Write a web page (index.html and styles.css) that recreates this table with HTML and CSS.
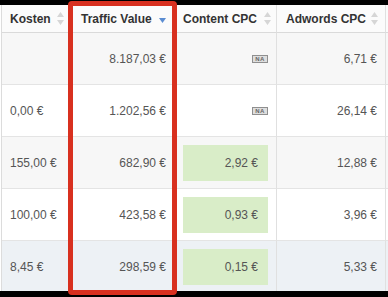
FILE: index.html
```html
<!DOCTYPE html>
<html>
<head>
<meta charset="utf-8">
<link rel="stylesheet" href="styles.css">
</head>
<body>
<div class="frame">
  <div class="grid">
    <div class="th"><span>Kosten</span><svg class="sort" width="7" height="13" viewBox="0 0 7 13"><path d="M3.5 0 L7 5 L0 5 Z M0 8 L7 8 L3.5 13 Z" fill="#d6d6d6"/></svg></div>
    <div class="th"><span>Traffic Value</span><svg class="desc" width="7" height="5" viewBox="0 0 7 5"><path d="M0 0 L7 0 L3.5 5 Z" fill="#5b8dd2"/></svg></div>
    <div class="th"><span>Content CPC</span><svg class="sort" width="7" height="13" viewBox="0 0 7 13"><path d="M3.5 0 L7 5 L0 5 Z M0 8 L7 8 L3.5 13 Z" fill="#d6d6d6"/></svg></div>
    <div class="th"><span>Adwords CPC</span><svg class="sort" width="7" height="13" viewBox="0 0 7 13"><path d="M3.5 0 L7 5 L0 5 Z M0 8 L7 8 L3.5 13 Z" fill="#d6d6d6"/></svg></div>
    <div class="th last"></div>

    <div class="td alt"></div>
    <div class="td alt num">8.187,03 €</div>
    <div class="td alt num"><span class="na">NA</span></div>
    <div class="td alt num">6,71 €</div>
    <div class="td alt last"></div>

    <div class="td">0,00 €</div>
    <div class="td num">1.202,56 €</div>
    <div class="td num"><span class="na">NA</span></div>
    <div class="td num">26,14 €</div>
    <div class="td last"></div>

    <div class="td alt">155,00 €</div>
    <div class="td alt num">682,90 €</div>
    <div class="td alt num"><div class="bar">2,92 €</div></div>
    <div class="td alt num">12,88 €</div>
    <div class="td alt last"></div>

    <div class="td">100,00 €</div>
    <div class="td num">423,58 €</div>
    <div class="td num"><div class="bar">0,93 €</div></div>
    <div class="td num">3,96 €</div>
    <div class="td last"></div>

    <div class="td hover">8,45 €</div>
    <div class="td hover num">298,59 €</div>
    <div class="td hover num"><div class="bar">0,15 €</div></div>
    <div class="td hover num">5,33 €</div>
    <div class="td hover last"></div>
  </div>
</div>
<div class="highlight"></div>
</body>
</html>
```
FILE: styles.css
```css
html, body {
  margin: 0;
  padding: 0;
  background: #000;
  height: 297px;
  overflow: hidden;
}
body {
  position: relative;
  font-family: "Liberation Sans", Arial, Helvetica, sans-serif;
  font-size: 12px;
}
.frame {
  margin-top: 5px;
  height: 286px;
  overflow: hidden;
  background: #fff;
  padding-left: 1px;
}
.grid {
  display: grid;
  grid-template-columns: 70px 103px 102px 109px 1fr;
  grid-template-rows: 28px repeat(5, 52px);
  border-left: 1px solid #dcdcdc;
}
.th, .td {
  box-sizing: border-box;
  border-right: 1px solid #e0e0e0;
  border-bottom: 1px solid #e4e4e4;
  display: flex;
  align-items: center;
  padding: 0 8px;
}
.th {
  background: #fbfbfb;
  color: #333;
  font-weight: bold;
  justify-content: space-between;
  padding-right: 7px;
  border-bottom-color: #dadada;
}
.th:nth-child(2), .th:nth-child(4) { padding-left: 9px; }
.th:nth-child(3) { padding-right: 5px; }
.th .desc { margin-top: 3px; margin-right: 1px; }
.td {
  color: #555;
  background: #fff;
}
.td.num { justify-content: flex-end; }
.td.alt { background: #f7f7f7; }
.td.hover { background: #edf1f5; }
.td.last, .th.last { border-right: none; }
.bar {
  box-sizing: border-box;
  flex: 1;
  height: 36px;
  background: #d9edc8;
  display: flex;
  align-items: center;
  justify-content: flex-end;
  padding-right: 10px;
}
.td:has(.bar) { padding: 0 8px; }
.na {
  display: inline-block;
  box-sizing: border-box;
  width: 16px;
  height: 8px;
  border: 1px solid #8f8f8f;
  background: #dedede;
  color: #666;
  font-size: 6px;
  font-weight: bold;
  line-height: 6px;
  text-align: center;
  letter-spacing: 0.3px;
}
.highlight {
  position: absolute;
  left: 68px;
  top: 1px;
  width: 109px;
  height: 294px;
  box-sizing: border-box;
  border: 5px solid #d8301f;
  border-radius: 4px;
}
```
